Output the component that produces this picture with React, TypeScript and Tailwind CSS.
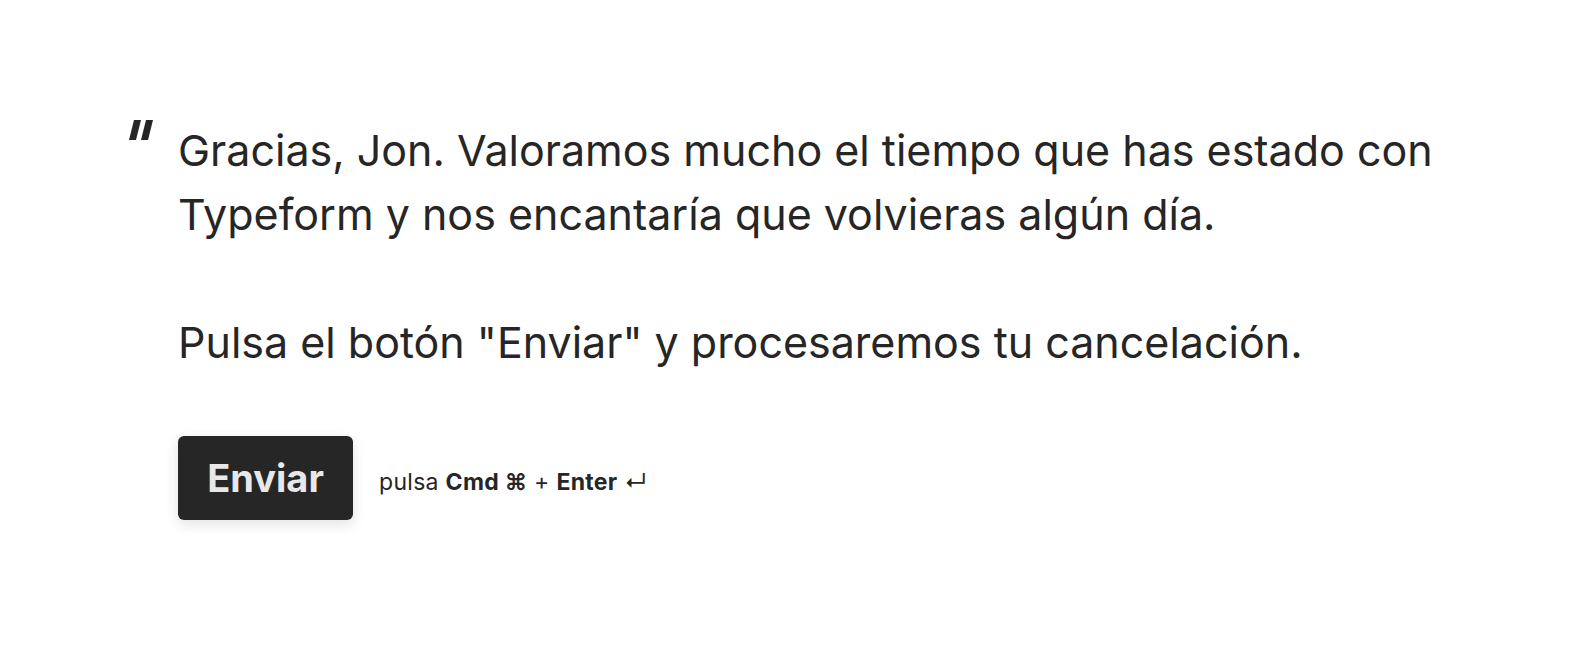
import React from "react";

const QuoteMark = () => (
  <svg width="24" height="20" viewBox="0 0 24 20" className="block">
    <polygon points="5,0 12,0 7,20 0,20" fill="#262626" />
    <polygon points="17,0 24,0 19,20 12,20" fill="#262626" />
  </svg>
);

const App = () => {
  return (
    <div
      className="w-[1592px] h-[668px] bg-white text-[#262626]"
      style={{ fontFamily: "Inter, 'Noto Sans', sans-serif" }}
    >
      <div className="flex pl-[129px] pt-[120px]">
        <div className="w-[49px] shrink-0">
          <QuoteMark />
        </div>
        <div className="flex flex-col">
          <div className="text-[43px] leading-[64px] -mt-[2px]">
            <p>
              Gracias, Jon. Valoramos mucho el tiempo que has estado con
              <br />
              Typeform y nos encantaría que volvieras algún día.
            </p>
            <p className="mt-[64px]">
              Pulsa el botón "Enviar" y procesaremos tu cancelación.
            </p>
          </div>
          <div className="flex items-center mt-[62px] gap-[26px]">
            <button className="w-[175px] h-[84px] rounded-[6px] bg-[#262626] text-[#e8e8e8] text-[38px] font-bold shadow-[0_4px_14px_rgba(0,0,0,0.12)]">
              Enviar
            </button>
            <span className="text-[23px] tracking-[0.3px] pt-[8px]">
              pulsa <b>Cmd ⌘</b> + <b>Enter</b> ↵
            </span>
          </div>
        </div>
      </div>
    </div>
  );
};

export default App;
